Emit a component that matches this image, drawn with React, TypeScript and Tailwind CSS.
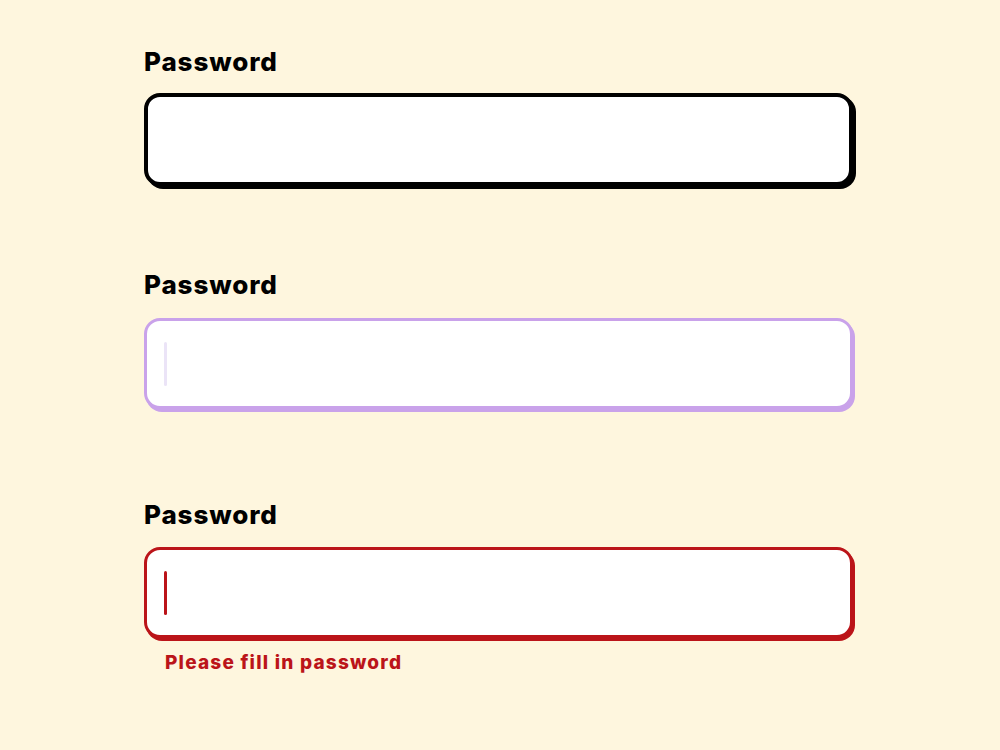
import React from "react";

export default function App() {
  return (
    <div className="w-[1000px] h-[750px] bg-[#fef6de] px-[144px] pt-[47px] text-black" style={{ fontFamily: "Inter, 'Noto Sans', sans-serif" }}>
      <div className="flex flex-col">
        <label className="text-[26px] font-extrabold leading-[30px] tracking-[0.9px]">Password</label>
        <div className="mt-[16px] h-[93px] w-[709px] rounded-[16px] border-4 border-black bg-white shadow-[3px_3px_0_#000]" />

        <label className="mt-[84px] text-[26px] font-extrabold leading-[30px] tracking-[0.9px]">Password</label>
        <div className="mt-[18px] h-[91px] w-[709px] rounded-[16px] border-[3px] border-[#c9a2ea] bg-white shadow-[2px_3px_0_#c9a2ea] flex items-center pl-[17px]">
          <div className="h-[44px] w-[3px] rounded-full bg-[#ebe4f7]" />
        </div>

        <label className="mt-[91px] text-[26px] font-extrabold leading-[30px] tracking-[0.9px]">Password</label>
        <div className="mt-[17px] h-[91px] w-[709px] rounded-[16px] border-[3px] border-[#bb1419] bg-white shadow-[2px_3px_0_#bb1419] flex items-center pl-[17px]">
          <div className="h-[44px] w-[3px] rounded-full bg-[#bb1419]" />
        </div>
        <p className="mt-[13px] pl-[21px] text-[19px] font-extrabold leading-[24px] text-[#bb1419] tracking-[1.2px]">Please fill in password</p>
      </div>
    </div>
  );
}
